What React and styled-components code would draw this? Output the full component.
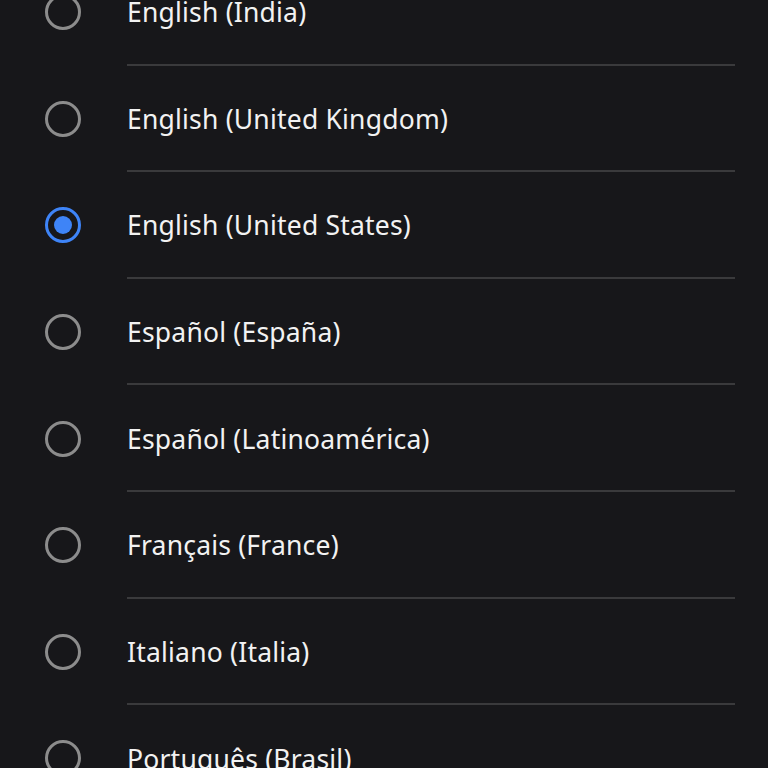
import styled, { createGlobalStyle } from 'styled-components';

const languages = [
  { name: 'English (India)' },
  { name: 'English (United Kingdom)' },
  { name: 'English (United States)', checked: true },
  { name: 'Español (España)' },
  { name: 'Español (Latinoamérica)' },
  { name: 'Français (France)' },
  { name: 'Italiano (Italia)' },
  { name: 'Português (Brasil)' },
];

const GlobalStyle = createGlobalStyle`
  html, body {
    margin: 0;
    padding: 0;
    background: #17171a;
    overflow: hidden;
  }
`;

const Screen = styled.div`
  width: 768px;
  height: 768px;
  overflow: hidden;
  background: #17171a;
  font-family: 'Noto Sans', Roboto, sans-serif;
`;

const List = styled.div`
  display: flex;
  flex-direction: column;
  margin-top: -41px;
`;

const Row = styled.div`
  display: flex;
  align-items: center;
  height: 106.6px;
  flex-shrink: 0;
  padding-left: 45px;
`;

const Radio = styled.div`
  box-sizing: border-box;
  width: 36px;
  height: 36px;
  border-radius: 50%;
  border: 3px solid ${(props) => (props.checked ? '#3e84f7' : '#8c8c8c')};
  display: flex;
  align-items: center;
  justify-content: center;
  flex-shrink: 0;
`;

const Dot = styled.div`
  width: 18px;
  height: 18px;
  border-radius: 50%;
  background: #3e84f7;
`;

const Label = styled.div`
  flex: 1;
  height: 100%;
  margin-left: 46px;
  margin-right: 33px;
  padding-top: 2px;
  display: flex;
  align-items: center;
  font-size: 26.5px;
  letter-spacing: 0.2px;
  color: #f2f2f2;
  border-bottom: ${(props) => (props.last ? 'none' : '2px solid #3a3a3c')};
  box-sizing: border-box;
`;

export default function App() {
  return (
    <>
      <GlobalStyle />
      <Screen>
        <List>
          {languages.map((item, i) => (
            <Row key={item.name}>
              <Radio checked={item.checked}>{item.checked && <Dot />}</Radio>
              <Label last={i === languages.length - 1}>{item.name}</Label>
            </Row>
          ))}
        </List>
      </Screen>
    </>
  );
}
